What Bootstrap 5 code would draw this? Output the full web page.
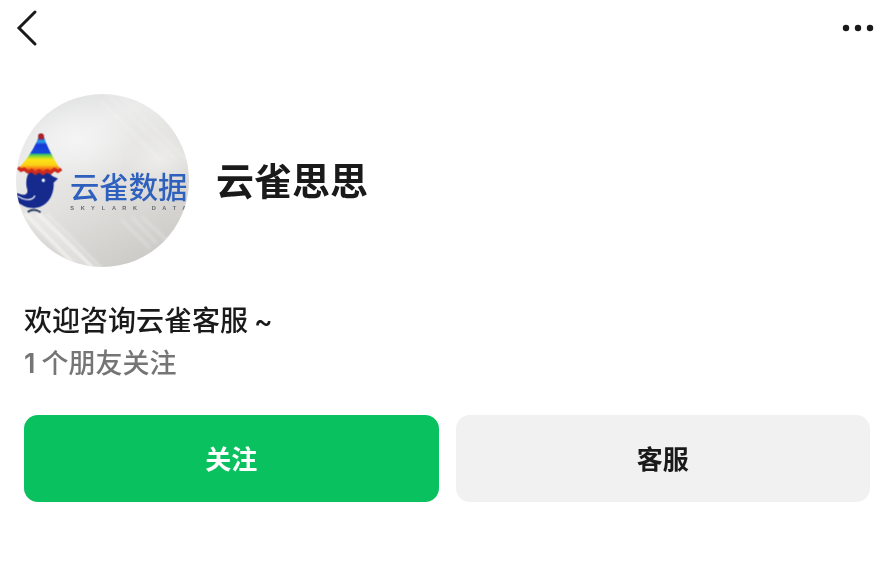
<!DOCTYPE html>
<html lang="zh-CN">
<head>
<meta charset="utf-8">
<meta name="viewport" content="width=device-width, initial-scale=1">
<title>云雀思思</title>
<link href="https://cdn.jsdelivr.net/npm/bootstrap@5.3.0/dist/css/bootstrap.min.css" rel="stylesheet">
<style>
body { font-family: Inter, "Noto Sans CJK SC", sans-serif; color: #1a1a1a; background: #fff; }
.topbar { height: 56px; padding: 0 12px 0 16px; }
.icon-btn { line-height: 0; color: #1a1a1a; }
.profile { padding: 38px 16px 0; gap: 27px; }
.avatar { width: 173px; height: 173px; }
.profile-name { font-size: 38px; line-height: 56px; font-weight: 700; }
.details { padding: 33px 16px 0 24px; }
.bio { font-size: 28px; line-height: 42px; font-weight: 500; }
.bio-tilde { margin-left: 6px; }
.friends { font-size: 27px; line-height: 44px; font-weight: 500; color: #757575; }
.friend-count { margin-right: 6px; font-weight: 600; }
.actions { padding: 29px 0 0; gap: 17px; }
.action-btn { height: 87px; padding: 8px 0 6px; border: 0; border-radius: 14px; font-size: 26px; font-weight: 700; }
.btn-follow, .btn-follow:hover { background: #0ac160; color: #fff; }
.btn-service, .btn-service:hover { background: #f1f1f1; color: #1a1a1a; }
</style>
</head>
<body>
<header class="topbar d-flex justify-content-between align-items-center">
  <button type="button" class="btn icon-btn border-0 p-0" aria-label="返回">
    <svg width="22" height="38" viewBox="0 0 22 38" fill="none" stroke="currentColor" stroke-width="3" stroke-linecap="round"><path d="M19 3 3 19 19 35"/></svg>
  </button>
  <button type="button" class="btn icon-btn border-0 p-0" aria-label="更多">
    <svg width="32" height="10" viewBox="0 0 32 10" fill="currentColor"><circle cx="4" cy="5" r="3.200"/><circle cx="16" cy="5" r="3.200"/><circle cx="28" cy="5" r="3.200"/></svg>
  </button>
</header>
<main>
  <section class="profile d-flex align-items-center">
    <svg class="avatar flex-shrink-0" viewBox="48 42 519 519" role="img" aria-label="云雀数据">
      <defs>
        <linearGradient id="wall" x1="0.2" y1="0" x2="0.7" y2="1">
          <stop offset="0" stop-color="#dedfdf"/><stop offset=".25" stop-color="#ebebeb"/><stop offset=".55" stop-color="#e2e1df"/><stop offset="1" stop-color="#cbcac6"/>
        </linearGradient>
        <radialGradient id="glow"><stop offset="0" stop-color="#f4f4f4"/><stop offset="1" stop-color="#f4f4f4" stop-opacity="0"/></radialGradient>
        <linearGradient id="hat" x1="0" y1="0" x2="0" y2="1">
          <stop offset="0" stop-color="#28389c"/><stop offset=".12" stop-color="#2aa0ea"/><stop offset=".22" stop-color="#1638d8"/><stop offset=".46" stop-color="#1648dc"/><stop offset=".5" stop-color="#35c070"/><stop offset=".58" stop-color="#a8dc28"/><stop offset=".66" stop-color="#fce414"/><stop offset=".82" stop-color="#fbd018"/><stop offset=".9" stop-color="#fa8a18"/><stop offset="1" stop-color="#ea3a18"/>
        </linearGradient>
        <clipPath id="round"><circle cx="307.500" cy="301.500" r="259.500"/></clipPath>
        <filter id="soft" x="-10%" y="-10%" width="120%" height="120%"><feGaussianBlur stdDeviation="4"/></filter>
        <filter id="print" x="-10%" y="-10%" width="120%" height="120%"><feGaussianBlur stdDeviation="1"/></filter>
      </defs>
      <g clip-path="url(#round)">
        <path fill="url(#wall)" d="M48 42h519v519H48z"/>
        <ellipse cx="230" cy="180" rx="190" ry="130" fill="url(#glow)"/>
        <ellipse cx="480" cy="240" rx="110" ry="80" fill="url(#glow)" opacity=".6"/>
        <g filter="url(#soft)" stroke="#f4f4f3" fill="none">
          <path stroke-width="8" opacity=".3" d="M330 50 530 240M360 45 570 250M300 60 480 240"/>
          <path stroke-width="12" opacity=".9" d="M75 400 240 570M112 398 285 570"/>
          <path stroke-width="6" opacity=".7" d="M92 397 264 572M140 400 310 570"/>
          <path stroke-width="8" opacity=".35" d="M365 420 450 505M395 410 470 490M425 410 500 480"/>
        </g>
        <g filter="url(#print)">
          <path fill="#142b8e" d="M88 278C110 266 145 272 157 288L174 296 161 308C163 350 138 384 101 384 79 384 60 374 46 360L46 338 66 344C80 346 86 338 80 322 77 305 80 286 88 278Z"/>
          <path fill="none" stroke="#e4e6f0" stroke-width="4" stroke-linecap="round" d="M54 349C72 361 96 364 104 348"/>
          <circle cx="130" cy="301" r="5" fill="#fff"/>
          <path fill="none" stroke="#2c3f60" stroke-width="6" d="M83 396Q102 383 122 397"/>
          <path fill="url(#hat)" d="M115 172H132C138 192 160 236 180 266Q120 282 56 264C80 240 106 200 115 172Z"/>
          <path fill="none" stroke="#cc2a1c" stroke-width="10" stroke-linejoin="round" d="M54 263 63 271 73 267 84 276 95 271 106 280 117 272 129 280 141 272 152 278 163 268 174 274 184 267"/>
          <circle cx="123" cy="169" r="9" fill="#a8202c"/>
        </g>
        <g filter="url(#print)">
          <text x="210" y="355" font-family="Noto Sans CJK SC, sans-serif" font-size="88" font-weight="500" fill="#2f60bd">云雀数据</text>
          <text y="390" font-family="Liberation Sans, sans-serif" font-size="17" font-weight="700" fill="#666872" x="211 242 273 305 336 367 399 455 487 518 547">SKYLARKDATA</text>
        </g>
      </g>
    </svg>
    <h1 class="profile-name mb-0">云雀思思</h1>
  </section>
  <section class="details">
    <p class="bio mb-0">欢迎咨询云雀客服<span class="bio-tilde">~</span></p>
    <p class="friends mb-0"><span class="friend-count">1</span>个朋友关注</p>
    <div class="actions d-flex">
      <button type="button" class="btn action-btn btn-follow flex-fill w-50">关注</button>
      <button type="button" class="btn action-btn btn-service flex-fill w-50">客服</button>
    </div>
  </section>
</main>
<script src="https://cdn.jsdelivr.net/npm/bootstrap@5.3.0/dist/js/bootstrap.bundle.min.js"></script>
</body>
</html>
